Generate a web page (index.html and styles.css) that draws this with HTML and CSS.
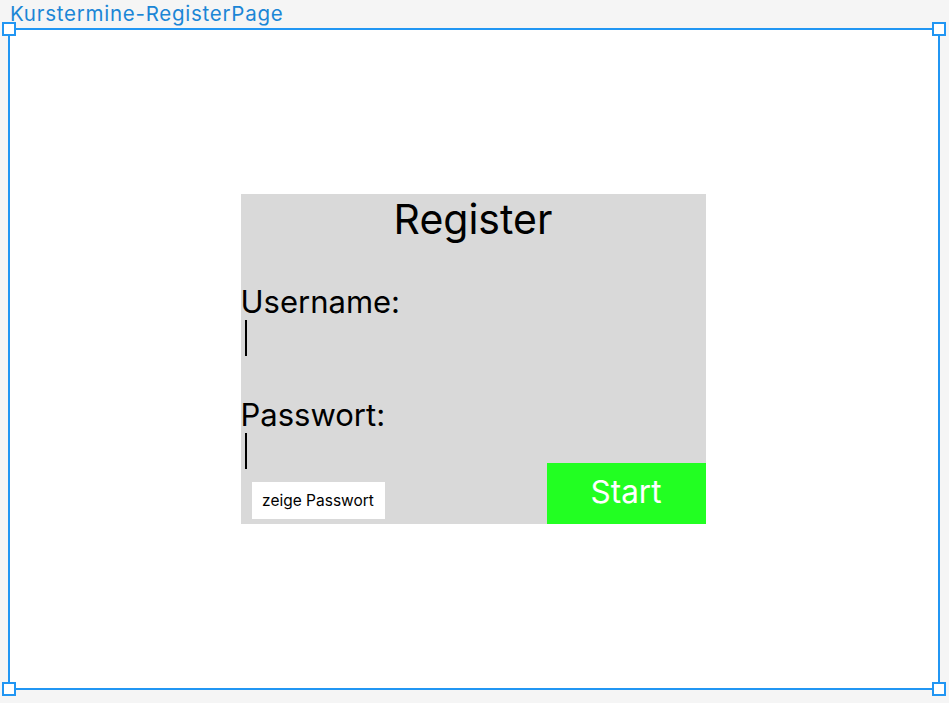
FILE: index.html
```html
<!DOCTYPE html>
<html>
<head>
<meta charset="utf-8">
<link rel="stylesheet" href="styles.css">
</head>
<body>
<div class="label">Kurstermine-RegisterPage</div>
<div class="frame">
  <span class="handle tl"></span>
  <span class="handle tr"></span>
  <span class="handle bl"></span>
  <span class="handle br"></span>
  <div class="card">
    <div class="title">Register</div>
    <div class="field">
      <div class="flabel">Username:</div>
      <div class="cursor"></div>
    </div>
    <div class="field">
      <div class="flabel">Passwort:</div>
      <div class="cursor"></div>
    </div>
    <div class="bottom">
      <div class="show">zeige Passwort</div>
      <div class="start">Start</div>
    </div>
  </div>
</div>
</body>
</html>
```
FILE: styles.css
```css
html, body {
  margin: 0;
  padding: 0;
  background: #f5f5f5;
  font-family: Inter, "Noto Sans", sans-serif;
}
body {
  width: 949px;
  height: 703px;
  overflow: hidden;
}
.label {
  height: 28px;
  padding-left: 10px;
  font-size: 20.5px;
  letter-spacing: 0.75px;
  line-height: 27px;
  color: #1b86d6;
  box-sizing: border-box;
}
.frame {
  position: relative;
  margin-left: 8px;
  width: 932px;
  height: 662px;
  box-sizing: border-box;
  border: 2px solid #2196f3;
  background: #fff;
  display: flex;
  align-items: center;
  justify-content: center;
}
.handle {
  position: absolute;
  width: 10px;
  height: 10px;
  background: #fff;
  border: 2px solid #2196f3;
}
.handle.tl { left: -8px; top: -8px; }
.handle.tr { right: -8px; top: -8px; }
.handle.bl { left: -8px; bottom: -8px; }
.handle.br { right: -8px; bottom: -8px; }
.card {
  width: 465px;
  height: 330px;
  margin-right: 2px;
  background: #d9d9d9;
  display: flex;
  flex-direction: column;
  color: #000;
}
.title {
  text-align: center;
  font-size: 41px;
  line-height: 50px;
  height: 50px;
}
.field {
  margin-top: 46px;
}
.field + .field {
  margin-top: 47px;
}
.flabel {
  font-size: 31px;
  line-height: 36px;
  height: 30px;
  margin-top: -6px;
}
.cursor {
  width: 2px;
  height: 36px;
  background: #000;
  margin-left: 4px;
  margin-top: 6px;
}
.bottom {
  margin-top: -6px;
  display: flex;
  align-items: flex-end;
  justify-content: space-between;
}
.show {
  margin: 0 0 5px 11px;
  width: 133px;
  height: 37px;
  background: #fff;
  font-size: 15.5px;
  line-height: 37px;
  text-align: center;
}
.start {
  width: 159px;
  height: 61px;
  background: #22ff22;
  color: #fff;
  font-size: 31.5px;
  line-height: 58px;
  text-align: center;
}
```
